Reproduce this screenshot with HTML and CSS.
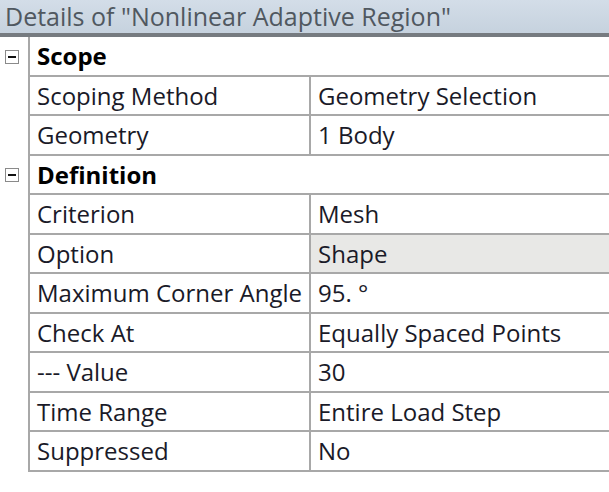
FILE: index.html
```html
<!DOCTYPE html>
<html>
<head>
<meta charset="utf-8">
<link rel="stylesheet" href="styles.css">
</head>
<body>
<div class="panel">
  <div class="title">Details of "Nonlinear Adaptive Region"</div>
  <div class="grid">
    <div class="toggle"><span class="box"></span></div>
    <div class="cell head">Scope</div>

    <div class="toggle"></div>
    <div class="cell label">Scoping Method</div>
    <div class="cell value">Geometry Selection</div>

    <div class="toggle"></div>
    <div class="cell label">Geometry</div>
    <div class="cell value">1 Body</div>

    <div class="toggle"><span class="box"></span></div>
    <div class="cell head">Definition</div>

    <div class="toggle"></div>
    <div class="cell label">Criterion</div>
    <div class="cell value">Mesh</div>

    <div class="toggle"></div>
    <div class="cell label">Option</div>
    <div class="cell value shaded">Shape</div>

    <div class="toggle"></div>
    <div class="cell label">Maximum Corner Angle</div>
    <div class="cell value">95. °</div>

    <div class="toggle"></div>
    <div class="cell label">Check At</div>
    <div class="cell value">Equally Spaced Points</div>

    <div class="toggle"></div>
    <div class="cell label">--- Value</div>
    <div class="cell value">30</div>

    <div class="toggle"></div>
    <div class="cell label">Time Range</div>
    <div class="cell value">Entire Load Step</div>

    <div class="toggle"></div>
    <div class="cell label last">Suppressed</div>
    <div class="cell value last">No</div>
  </div>
</div>
</body>
</html>
```
FILE: styles.css
```css
html, body {
  margin: 0;
  padding: 0;
  background: #ffffff;
  overflow: hidden;
}
.panel {
  width: 609px;
  height: 492px;
  font-family: "Open Sans", "Noto Sans", sans-serif;
}
.title {
  height: 37px;
  box-sizing: border-box;
  padding-left: 5px;
  line-height: 32px;
  font-size: 25px;
  color: #505860;
  background: linear-gradient(#d3dde8, #c6d2de);
  border-bottom: 4px solid #767b80;
  white-space: nowrap;
}
.grid {
  display: grid;
  grid-template-columns: 30px 281px 1fr;
  grid-auto-rows: 39.5px;
}
.toggle {
  display: flex;
  align-items: center;
  padding-left: 5px;
  border-right: 2px solid #a8a8a8;
}
.box {
  width: 12px;
  height: 12px;
  border: 1px solid #8a8a8a;
  background: #fff;
  position: relative;
}
.box::after {
  content: "";
  position: absolute;
  left: 2px;
  right: 2px;
  top: 5px;
  height: 2px;
  background: #111;
}
.cell {
  display: flex;
  align-items: center;
  padding-left: 7px;
  font-size: 24px;
  color: #1a1a28;
  border-bottom: 2px solid #a8a8a8;
  white-space: nowrap;
  overflow: hidden;
}
.head {
  grid-column: 2 / 4;
  font-weight: bold;
  color: #000;
}
.label {
  border-right: 2px solid #a8a8a8;
}
.shaded {
  background: #e8e8e6;
}
```
